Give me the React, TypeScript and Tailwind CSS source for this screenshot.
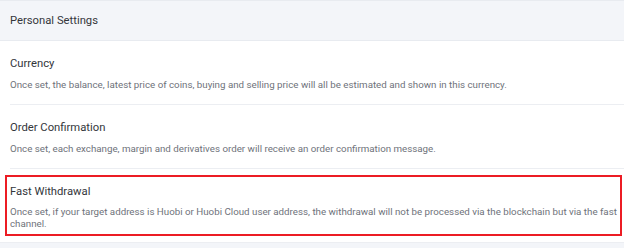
import React from "react";

const sections = [
  {
    title: "Currency",
    desc: "Once set, the balance, latest price of coins, buying and selling price will all be estimated and shown in this currency.",
  },
  {
    title: "Order Confirmation",
    desc: "Once set, each exchange, margin and derivatives order will receive an order confirmation message.",
  },
];

export default function App() {
  return (
    <div
      className="w-[624px] h-[248px] overflow-hidden bg-white"
      style={{ fontFamily: "Roboto, 'Liberation Sans', sans-serif" }}
    >
      <div className="h-[41px] border-t border-b border-[#e8ebf0] bg-[#f3f5f9] flex items-center pl-[10px] pt-[2px] text-[11.25px] text-[#33363b]">
        Personal Settings
      </div>
      {sections.map((s) => (
        <div key={s.title} className="pl-[10px]">
          <div className="pt-[15px] pb-[13px] pr-[10px]">
            <div className="text-[11.25px] leading-[16px] text-[#33363b]">{s.title}</div>
            <div className="mt-[7px] text-[9.75px] leading-[12px] text-[#6e727a]">{s.desc}</div>
          </div>
          <div className="h-px bg-[#eceef2]" />
        </div>
      ))}
      <div className="relative pl-[10px]">
        <div className="pt-[15px] pb-[12px] pr-[6px]">
          <div className="text-[11.25px] leading-[16px] text-[#33363b]">Fast Withdrawal</div>
          <div className="mt-[6px] text-[9.75px] leading-[12px] text-[#6e727a]">
            Once set, if your target address is Huobi or Huobi Cloud user address, the withdrawal will not be processed via the blockchain but via the fast channel.
          </div>
        </div>
        <div className="absolute left-[5px] right-[2px] top-[6px] bottom-[6px] border-2 border-[#ec1c24] pointer-events-none" />
      </div>
      <div className="h-px bg-[#eceef2]" />
      <div className="h-[10px] bg-[#f3f5f9]" />
    </div>
  );
}
